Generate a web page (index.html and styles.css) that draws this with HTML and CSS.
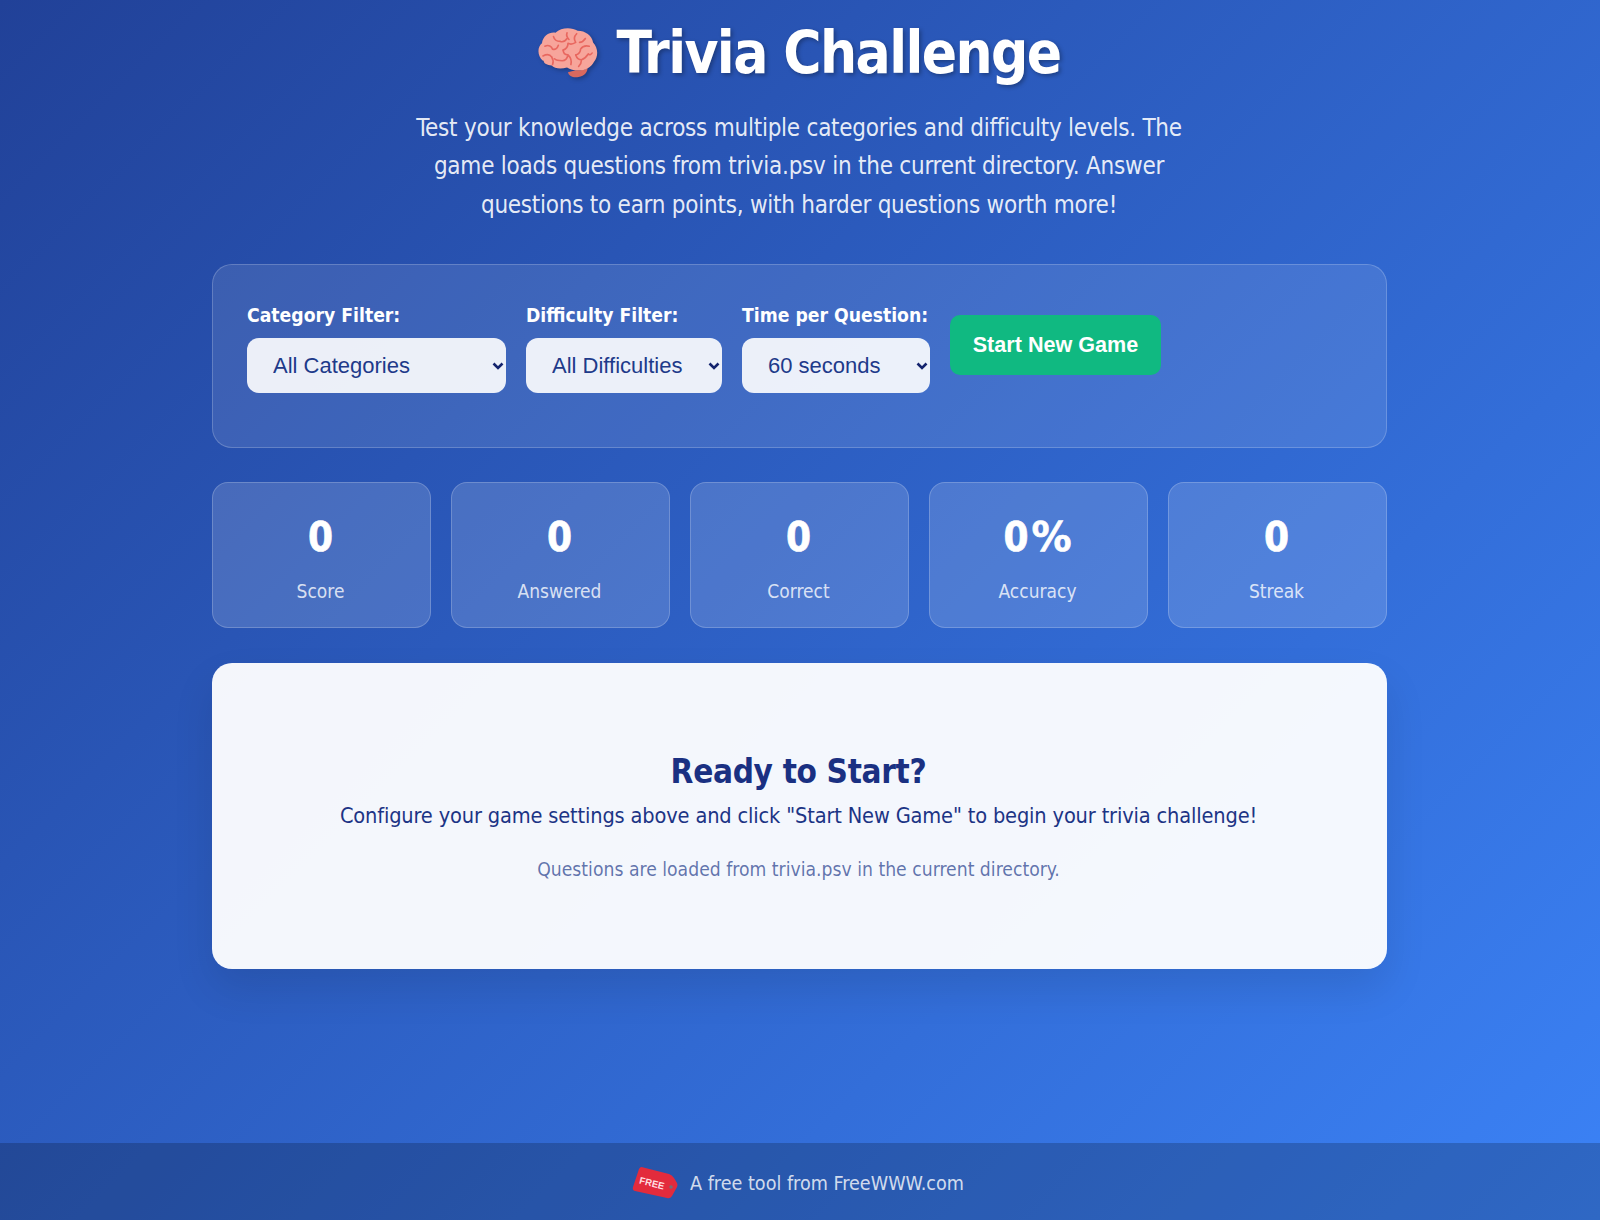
FILE: index.html
```html
<!DOCTYPE html>
<html lang="en">
<head>
<meta charset="utf-8">
<title>Trivia Challenge</title>
<link rel="stylesheet" href="styles.css">
</head>
<body>
<main class="container">
  <header class="header">
    <h1 class="title">
      <svg class="brain" viewBox="0 0 64 56" aria-hidden="true">
        <path d="M40 46c4 0 10 0 12-3 1 4-3 9-9 10-6 1-10-1-11-5z" fill="#d9695f"/>
        <path d="M6 36C0 31 0 22 5 18 6 10 13 6 19 7 25 1 36 1 42 5c8 0 15 5 16 12 5 5 6 14 1 20-3 6-9 9-16 9-5 0-9-1-12-3-7 2-13 1-16-2-5 0-9-3-8-5z" fill="#f7a59b"/>
        <g fill="none" stroke="#e8675f" stroke-width="1.7" stroke-linecap="round" stroke-linejoin="round">
          <path d="M8 21c4-2 7 0 8 3M6 31c4-2 7-2 9 1M16 24c3 1 5-1 6-4M17 11c1 4 4 5 7 5M24 16c3 1 5 0 7-3M31 7c-1 3 0 5 2 7"/>
          <path d="M41 8c-3 3-3 6-1 9M40 17c-3 2-6 2-8 1M50 13c-2 3-4 4-6 4M54 21c-4-1-7 0-9 3M45 24c0 3-2 5-5 6M32 18c0 4-2 6-5 7"/>
          <path d="M27 25c0 3 2 5 5 5M32 30c-1 4-3 6-6 6M15 32c2 3 2 5 1 8M26 36c-3 0-6 0-8-2M40 30c1 3 3 5 6 5M46 35c3-1 5-3 7-6M32 30c3 3 4 6 3 10M46 35c0 3-1 5-3 7M57 28c-1 2-3 2-4 1"/>
        </g>
      </svg>
      <span>Trivia Challenge</span>
    </h1>
    <p class="subtitle">Test your knowledge across multiple categories and difficulty levels. The game loads questions from trivia.psv in the current directory. Answer questions to earn points, with harder questions worth more!</p>
  </header>

  <section class="controls">
    <div class="field">
      <label class="field-label" for="cat">Category Filter:</label>
      <div class="select-wrap">
        <select id="cat" class="select select-cat"><option>All Categories</option></select>
        <svg class="chevron" viewBox="0 0 12 8" aria-hidden="true"><path d="M1.500 1.500 6 6l4.500-4.500"/></svg>
      </div>
    </div>
    <div class="field">
      <label class="field-label" for="dif">Difficulty Filter:</label>
      <div class="select-wrap">
        <select id="dif" class="select select-dif"><option>All Difficulties</option></select>
        <svg class="chevron" viewBox="0 0 12 8" aria-hidden="true"><path d="M1.500 1.500 6 6l4.500-4.500"/></svg>
      </div>
    </div>
    <div class="field">
      <label class="field-label" for="tim">Time per Question:</label>
      <div class="select-wrap">
        <select id="tim" class="select select-tim"><option>60 seconds</option></select>
        <svg class="chevron" viewBox="0 0 12 8" aria-hidden="true"><path d="M1.500 1.500 6 6l4.500-4.500"/></svg>
      </div>
    </div>
    <button class="start" type="button">Start New Game</button>
  </section>

  <section class="stats">
    <div class="stat"><div class="stat-value">0</div><div class="stat-label">Score</div></div>
    <div class="stat"><div class="stat-value">0</div><div class="stat-label">Answered</div></div>
    <div class="stat"><div class="stat-value">0</div><div class="stat-label">Correct</div></div>
    <div class="stat"><div class="stat-value">0<span class="pct">%</span></div><div class="stat-label">Accuracy</div></div>
    <div class="stat"><div class="stat-value">0</div><div class="stat-label">Streak</div></div>
  </section>

  <section class="card">
    <h2 class="card-title">Ready to Start?</h2>
    <p class="card-text">Configure your game settings above and click "Start New Game" to begin your trivia challenge!</p>
    <p class="card-note">Questions are loaded from trivia.psv in the current directory.</p>
  </section>
</main>
<footer class="footer">
  <svg class="tag" viewBox="0 0 46 34" aria-hidden="true">
    <path d="M9.500 1 37 8q3 1 5 4l3 5q1 2 0 4l-5 9q-2 3-5 2L3 25q-3-1-2-4L7 3q1-2 2.500-2z" fill="#e32b3c"/>
    <circle cx="39" cy="21" r="1.800" fill="#7d6a72"/>
    <text x="20" y="20.500" class="tag-text" transform="rotate(14 20 17)">FREE</text>
  </svg>
  <span>A free tool from FreeWWW.com</span>
</footer>
</body>
</html>
```
FILE: styles.css
```css
* { box-sizing: border-box; }
html, body { margin: 0; padding: 0; }
body {
  min-height: 1220px;
  display: flex;
  flex-direction: column;
  background: linear-gradient(135deg, #214198 0%, #3b82f6 100%);
  font-family: "DejaVu Sans Condensed", "DejaVu Sans", sans-serif;
  color: #fff;
}
.container {
  flex: 1;
  width: 1175px;
  margin: 0 0 0 212px;
}
.header { text-align: center; padding-right: 1px; }
.title {
  margin: 0;
  padding-top: 14px;
  font-size: 58px;
  letter-spacing: -1.6px;
  line-height: 78px;
  font-weight: 700;
  display: flex;
  justify-content: center;
  align-items: center;
  gap: 17px;
  text-shadow: 2px 2px 4px rgba(0, 0, 0, 0.3);
}
.brain { width: 62px; height: 54px; filter: drop-shadow(2px 2px 2px rgba(0,0,0,.25)); }
.subtitle {
  width: 800px;
  margin: 17px auto 0;
  font-size: 24px;
  letter-spacing: -0.25px;
  line-height: 38.4px;
  color: rgba(255, 255, 255, 0.9);
}
.controls {
  margin-top: 40px;
  height: 184px;
  padding: 34px;
  display: flex;
  align-items: flex-start;
  gap: 20px;
  background: rgba(255, 255, 255, 0.1);
  border: 1px solid rgba(255, 255, 255, 0.2);
  border-radius: 20px;
}
.field { display: flex; flex-direction: column; gap: 11px; padding-top: 6px; }
.field-label { font-size: 19.2px; line-height: 22px; font-weight: 700; white-space: nowrap; }
.select-wrap { position: relative; display: flex; }
.select {
  appearance: none;
  height: 55px;
  padding: 0 0 0 26px;
  font-family: "Liberation Sans", Arial, sans-serif;
  font-size: 22px;
  color: #1e3a8a;
  background: rgba(255, 255, 255, 0.9);
  border: 0;
  border-radius: 12px;
}
.select-cat { width: 259px; }
.select-dif { width: 196px; }
.select-tim { width: 188px; }
.chevron {
  position: absolute;
  right: 2px;
  top: 24px;
  width: 12px;
  height: 8px;
  fill: none;
  stroke: #14246e;
  stroke-width: 2.6;
}
.start {
  width: 211px;
  height: 60px;
  margin-top: 16px;
  border: 0;
  border-radius: 10px;
  background: #10b981;
  color: #fff;
  font-family: "Liberation Sans", Arial, sans-serif;
  font-size: 21.6px;
  font-weight: 700;
}
.stats {
  margin-top: 34px;
  display: grid;
  grid-template-columns: repeat(5, 1fr);
  gap: 20px;
}
.stat {
  height: 146px;
  text-align: center;
  padding: 26px 2px 0 0;
  background: rgba(255, 255, 255, 0.15);
  border: 1px solid rgba(255, 255, 255, 0.2);
  border-radius: 16px;
}
.stat-value {
  font-size: 40px;
  line-height: 56px;
  font-weight: 700;
  -webkit-text-stroke: 0.6px #fff;
}
.pct { font-family: "DejaVu Sans", sans-serif; margin-left: 3px; }
.stat-label { margin-top: 12px; font-size: 19px; line-height: 28px; color: rgba(255, 255, 255, 0.8); }
.card {
  margin-top: 35px;
  height: 306px;
  padding: 90px 2px 0 0;
  text-align: center;
  background: rgba(255, 255, 255, 0.95);
  border-radius: 20px;
  box-shadow: 0 20px 40px rgba(0, 0, 0, 0.1);
  color: #1c3485;
}
.card-title { margin: 0; font-size: 33px; letter-spacing: -0.32px; line-height: 38px; font-weight: 700; color: #1a3082; }
.card-text { margin: 7px 0 0; font-size: 21.6px; letter-spacing: -0.15px; line-height: 36px; }
.card-note { margin: 19px 0 0; font-size: 19.2px; line-height: 34px; color: rgba(30, 58, 138, 0.7); }
.footer {
  height: 77px;
  flex: none;
  display: flex;
  justify-content: center;
  align-items: center;
  gap: 12px;
  padding: 3px 4px 0 0;
  background: rgba(0, 0, 0, 0.2);
  color: rgba(255, 255, 255, 0.8);
  font-size: 19.6px;
}
.tag { width: 46px; height: 34px; }
.tag-text { font-family: "Liberation Sans", Arial, sans-serif; font-size: 9.5px; font-weight: 700; fill: #ffdfe2; text-anchor: middle; }
```
